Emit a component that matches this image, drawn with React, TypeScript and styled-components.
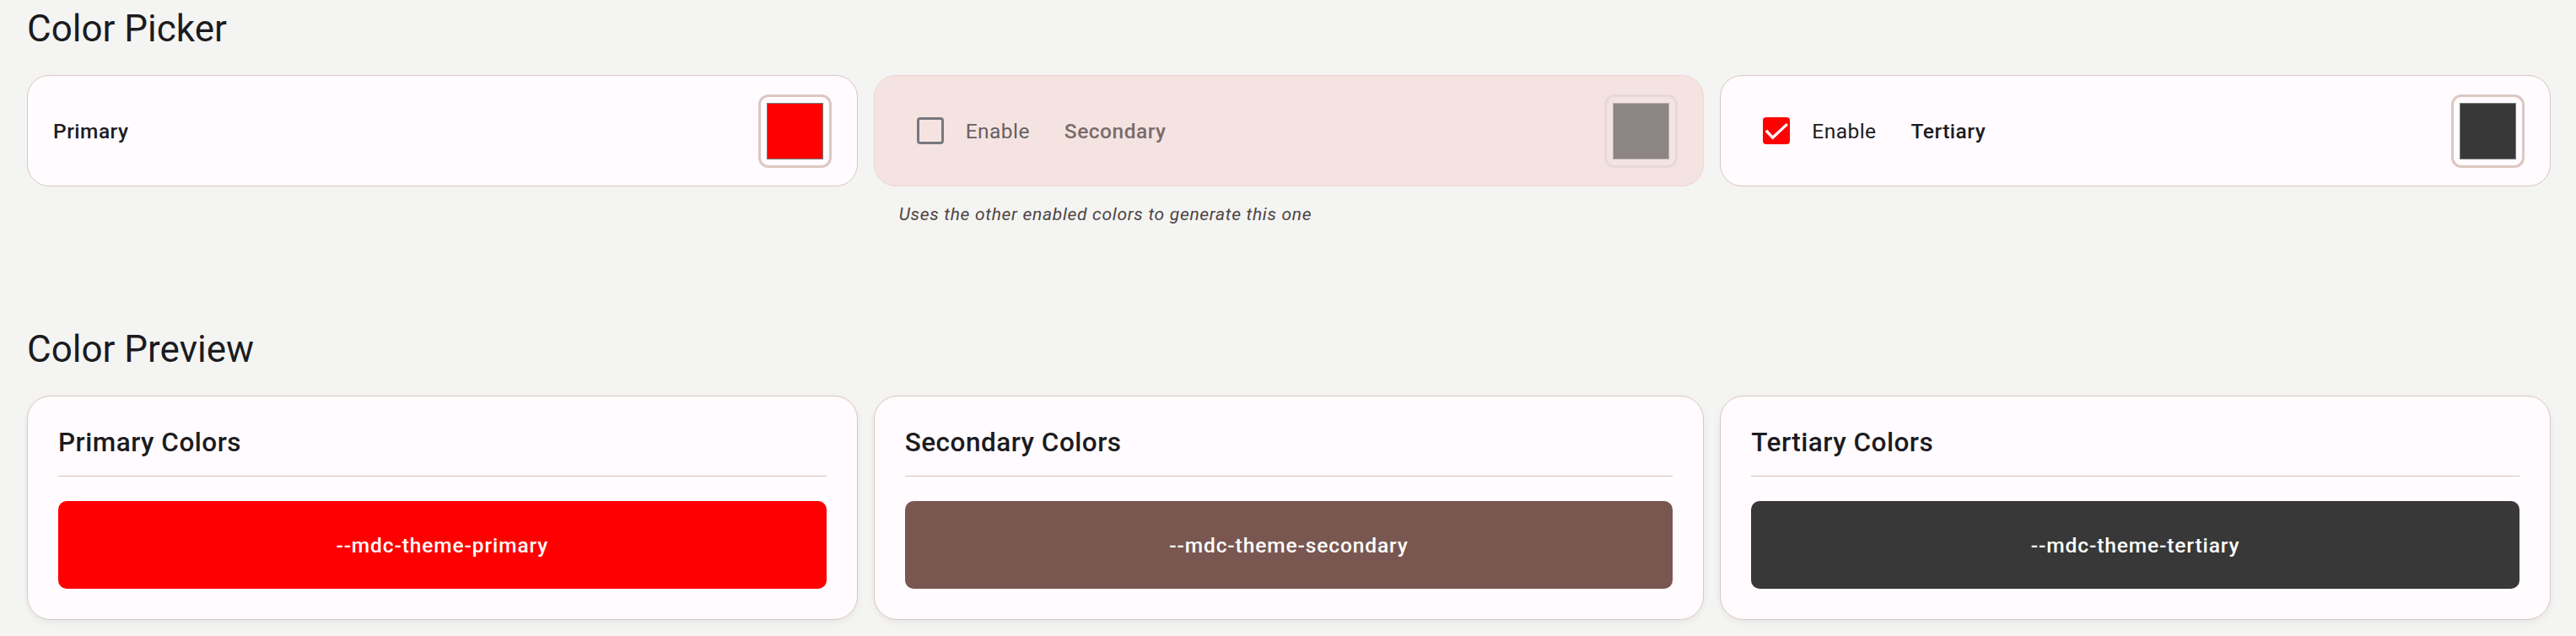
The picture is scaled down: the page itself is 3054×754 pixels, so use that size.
import React from "react";
import styled, { createGlobalStyle } from "styled-components";

const GlobalStyle = createGlobalStyle`
  html, body {
    margin: 0;
    padding: 0;
    background: #f4f5f3;
  }
  body {
    font-family: Roboto, "Liberation Sans", Arial, sans-serif;
    color: #1c1b1f;
  }
  * { box-sizing: border-box; }
`;

const Page = styled.div`
  padding: 8px 30px 19px 32px;
  display: flex;
  flex-direction: column;
`;

const Section = styled.section<{ $gapAfter?: number }>`
  display: flex;
  flex-direction: column;
  margin-bottom: ${(p) => p.$gapAfter ?? 0}px;
`;

const SectionTitle = styled.h2`
  margin: 0 0 29px 0;
  font-size: 44px;
  line-height: 52px;
  font-weight: 400;
  color: #1c1b1f;
  letter-spacing: 0;
`;

const Grid = styled.div`
  display: grid;
  grid-template-columns: repeat(3, 1fr);
  column-gap: 19px;
  align-items: start;
`;

const Column = styled.div`
  display: flex;
  flex-direction: column;
`;

const PickerCard = styled.div<{ $disabled?: boolean }>`
  height: 132px;
  display: flex;
  align-items: center;
  padding: 0 30px;
  border-radius: 26px;
  border: 1px solid ${(p) => (p.$disabled ? "#ead6d3" : "#dac6c1")};
  background: ${(p) => (p.$disabled ? "#f5e3e1" : "#fffbfe")};
`;

const Left = styled.div`
  display: flex;
  align-items: center;
  flex: 1;
`;

const CheckBox = styled.span<{ $checked?: boolean }>`
  width: 32px;
  height: 32px;
  margin-left: 20px;
  border-radius: 4px;
  display: flex;
  align-items: center;
  justify-content: center;
  border: ${(p) => (p.$checked ? "none" : "3px solid #77787e")};
  background: ${(p) => (p.$checked ? "#ff0000" : "transparent")};
`;

const EnableText = styled.span<{ $disabled?: boolean }>`
  margin-left: 26px;
  font-size: 24.5px;
  letter-spacing: 0.45px;
  font-weight: 400;
  color: ${(p) => (p.$disabled ? "#646263" : "#1c1b1f")};
`;

const PickerLabel = styled.span<{ $disabled?: boolean; $offset?: number }>`
  margin-left: ${(p) => p.$offset ?? 0}px;
  font-size: 24.5px;
  letter-spacing: 0.5px;
  font-weight: 500;
  color: ${(p) => (p.$disabled ? "#786c6b" : "#1c1b1f")};
`;

const SwatchFrame = styled.div<{ $disabled?: boolean }>`
  width: 87px;
  height: 87px;
  padding: 7px;
  border-radius: 12px;
  border: 3px solid ${(p) => (p.$disabled ? "#e8d8d7" : "#dcc7c1")};
  display: flex;
`;

const Swatch = styled.div<{ $color: string; $disabled?: boolean }>`
  flex: 1;
  background: ${(p) => p.$color};
  border: 1px solid ${(p) => (p.$disabled ? "#b3acab" : "#767676")};
`;

const Helper = styled.p`
  margin: 21px 0 0 30px;
  font-size: 21px;
  line-height: 24px;
  letter-spacing: 0.7px;
  font-style: italic;
  color: #4f4443;
`;

const PreviewCard = styled.div`
  padding: 36px;
  border-radius: 28px;
  border: 1px solid #dac6c1;
  background: #fffbfe;
  box-shadow: 0 3px 8px rgba(0, 0, 0, 0.06);
  display: flex;
  flex-direction: column;
`;

const PreviewTitle = styled.h3`
  margin: 0;
  font-size: 31.5px;
  line-height: 38px;
  letter-spacing: 0.5px;
  font-weight: 500;
  color: #1c1b1f;
`;

const Divider = styled.hr`
  margin: 20px 0 0 0;
  border: none;
  height: 1px;
  background: #d8c2bc;
`;

const ColorBar = styled.div<{ $color: string }>`
  margin-top: 29px;
  height: 104px;
  border-radius: 10px;
  background: ${(p) => p.$color};
  display: flex;
  align-items: center;
  justify-content: center;
  color: #ffffff;
  font-size: 24.5px;
  letter-spacing: 0.9px;
  font-weight: 500;
`;

const CheckMark = () => (
  <svg width="32" height="32" viewBox="0 0 33 33" aria-hidden="true">
    <path
      d="M5 17.5 L12 25 L28.5 9.5"
      fill="none"
      stroke="#ffffff"
      strokeWidth="3.4"
      strokeLinecap="square"
    />
  </svg>
);

const previews = [
  { title: "Primary Colors", color: "#ff0000", token: "--mdc-theme-primary" },
  { title: "Secondary Colors", color: "#795750", token: "--mdc-theme-secondary" },
  { title: "Tertiary Colors", color: "#383838", token: "--mdc-theme-tertiary" },
];

export default function App() {
  return (
    <>
      <GlobalStyle />
      <Page>
        <Section $gapAfter={122}>
          <SectionTitle>Color Picker</SectionTitle>
          <Grid>
            <Column>
              <PickerCard>
                <Left>
                  <PickerLabel>Primary</PickerLabel>
                </Left>
                <SwatchFrame>
                  <Swatch $color="#ff0000" />
                </SwatchFrame>
              </PickerCard>
            </Column>
            <Column>
              <PickerCard $disabled>
                <Left>
                  <CheckBox />
                  <EnableText $disabled>Enable</EnableText>
                  <PickerLabel $disabled $offset={41}>
                    Secondary
                  </PickerLabel>
                </Left>
                <SwatchFrame $disabled>
                  <Swatch $color="#8d8685" $disabled />
                </SwatchFrame>
              </PickerCard>
              <Helper>Uses the other enabled colors to generate this one</Helper>
            </Column>
            <Column>
              <PickerCard>
                <Left>
                  <CheckBox $checked>
                    <CheckMark />
                  </CheckBox>
                  <EnableText>Enable</EnableText>
                  <PickerLabel $offset={41}>Tertiary</PickerLabel>
                </Left>
                <SwatchFrame>
                  <Swatch $color="#383838" />
                </SwatchFrame>
              </PickerCard>
            </Column>
          </Grid>
        </Section>
        <Section>
          <SectionTitle>Color Preview</SectionTitle>
          <Grid>
            {previews.map((p) => (
              <PreviewCard key={p.title}>
                <PreviewTitle>{p.title}</PreviewTitle>
                <Divider />
                <ColorBar $color={p.color}>{p.token}</ColorBar>
              </PreviewCard>
            ))}
          </Grid>
        </Section>
      </Page>
    </>
  );
}
